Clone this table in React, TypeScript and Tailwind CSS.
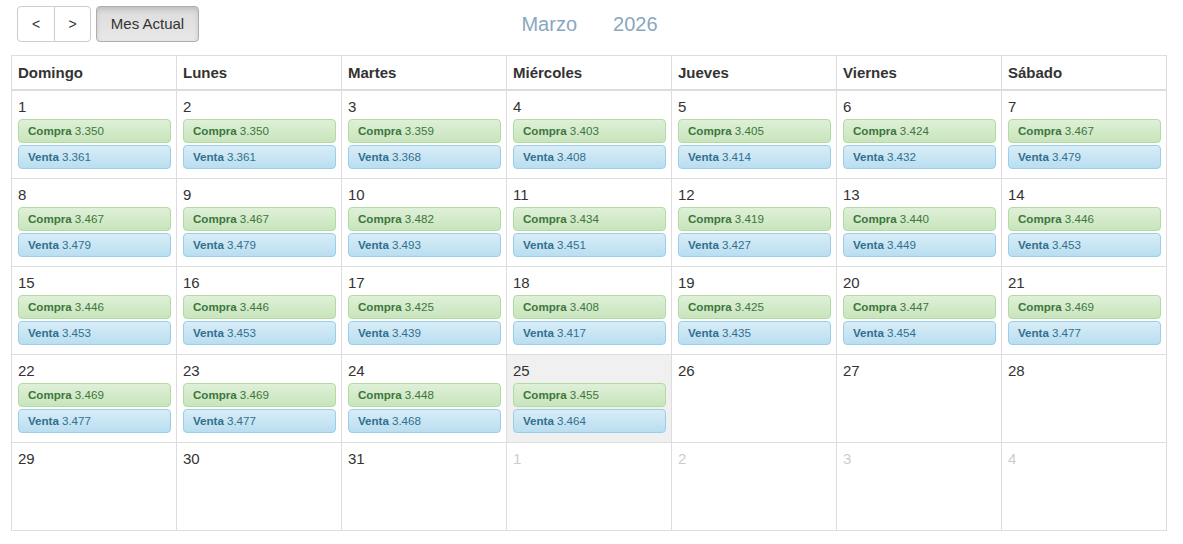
import React from "react";

const data: Record<number, [string, string]> = {
  1: ["3.350", "3.361"],
  2: ["3.350", "3.361"],
  3: ["3.359", "3.368"],
  4: ["3.403", "3.408"],
  5: ["3.405", "3.414"],
  6: ["3.424", "3.432"],
  7: ["3.467", "3.479"],
  8: ["3.467", "3.479"],
  9: ["3.467", "3.479"],
  10: ["3.482", "3.493"],
  11: ["3.434", "3.451"],
  12: ["3.419", "3.427"],
  13: ["3.440", "3.449"],
  14: ["3.446", "3.453"],
  15: ["3.446", "3.453"],
  16: ["3.446", "3.453"],
  17: ["3.425", "3.439"],
  18: ["3.408", "3.417"],
  19: ["3.425", "3.435"],
  20: ["3.447", "3.454"],
  21: ["3.469", "3.477"],
  22: ["3.469", "3.477"],
  23: ["3.469", "3.477"],
  24: ["3.448", "3.468"],
  25: ["3.455", "3.464"],
};

const days = ["Domingo", "Lunes", "Martes", "Miércoles", "Jueves", "Viernes", "Sábado"];

export default function App() {
  const cells: { n: number; other: boolean }[] = [];
  for (let i = 1; i <= 31; i++) cells.push({ n: i, other: false });
  for (let i = 1; i <= 4; i++) cells.push({ n: i, other: true });

  return (
    <div
      className="w-[1183px] h-[544px] bg-white pl-[11px] pt-[6px] text-[#333]"
      style={{ fontFamily: '"Liberation Sans", Arial, sans-serif' }}
    >
      <div className="relative w-[1156px] h-[36px] flex items-center">
        <div className="ml-[6px] flex h-[36px]">
          <div className="flex border border-[#ccc] rounded-[4px] bg-white overflow-hidden">
            <button className="w-[37px] h-full text-[14px] text-[#333] border-r border-[#ccc]">&lt;</button>
            <button className="w-[35px] h-full text-[14px] text-[#333]">&gt;</button>
          </div>
          <button className="ml-[5px] w-[103px] h-full rounded-[4px] border border-[#adadad] bg-gradient-to-b from-[#dcdcdc] to-[#e8e8e8] shadow-[inset_0_3px_5px_rgba(0,0,0,0.125)] text-[15px] text-[#333]">
            Mes Actual
          </button>
        </div>
        <div className="absolute left-0 right-0 top-0 h-[36px] flex items-center justify-center pointer-events-none text-[20px] text-[#8aa7bf]">
          <span className="ml-[1px]">Marzo</span>
          <span className="ml-[36px]">2026</span>
        </div>
      </div>

      <div className="w-[1156px] mt-[13px] border-l border-t border-[#ddd]">
        <div className="grid grid-cols-7 border-b-2 border-[#ddd]">
          {days.map((d) => (
            <div key={d} className="h-[33px] border-r border-[#ddd] px-[6px] pt-[1px] flex items-center font-bold text-[15px] text-[#333]">
              {d}
            </div>
          ))}
        </div>
        <div className="grid grid-cols-7">
          {cells.map((c, idx) => {
            const ev = !c.other ? data[c.n] : undefined;
            const today = !c.other && c.n === 25;
            return (
              <div
                key={idx}
                className={
                  "h-[88px] border-r border-b border-[#ddd] pl-[6px] pr-[5px] pt-[7px] " +
                  (today ? "bg-[#f0f0f0]" : "bg-white")
                }
              >
                <div className={"text-[15px] leading-[18px] " + (c.other ? "text-[#cccccc]" : "text-[#333]")}>
                  {c.n}
                </div>
                {ev && (
                  <div className="mt-[3px] flex flex-col gap-[2px]">
                    <div className="h-[24px] rounded-[4px] border border-[#b2dba1] bg-gradient-to-b from-[#dff0d8] to-[#c8e5bc] text-[#3c763d] text-[11.6px] flex items-center pl-[9px]">
                      <span className="font-bold">Compra</span>
                      <span className="ml-[3px]">{ev[0]}</span>
                    </div>
                    <div className="h-[24px] rounded-[4px] border border-[#9acfea] bg-gradient-to-b from-[#d9edf7] to-[#b9def0] text-[#31708f] text-[11.6px] flex items-center pl-[9px]">
                      <span className="font-bold">Venta</span>
                      <span className="ml-[3px]">{ev[1]}</span>
                    </div>
                  </div>
                )}
              </div>
            );
          })}
        </div>
      </div>
    </div>
  );
}
